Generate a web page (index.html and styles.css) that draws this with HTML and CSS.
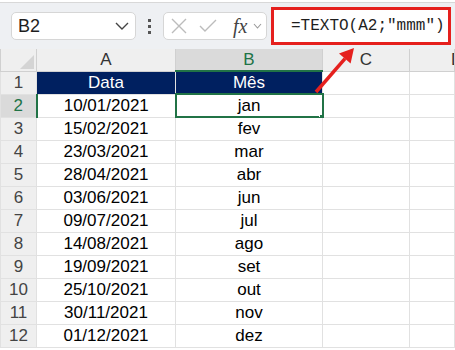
FILE: index.html
```html
<!DOCTYPE html>
<html lang="pt">
<head>
  <meta charset="UTF-8" />
  <title>TEXTO mmm</title>
  <link rel="stylesheet" href="styles.css">
</head>
<body>

  <div class="topbar"></div>

  <!-- formula bar -->
  <div class="toolbar">
    <div class="name-box">
      <span>B2</span>
      <svg width="14" height="8" viewBox="0 0 14 8"><path d="M1 1 L7 7 L13 1" fill="none" stroke="#444" stroke-width="1.4"/></svg>
    </div>
    <div class="dots"><i></i><i></i><i></i></div>
    <div class="fx-box">
      <svg width="16" height="16" viewBox="0 0 16 16"><path d="M1 1 L15 15 M15 1 L1 15" stroke="#bcbcbc" stroke-width="1.4"/></svg>
      <svg width="18" height="14" viewBox="0 0 18 14"><path d="M1 7 L6 12 L17 1" fill="none" stroke="#bcbcbc" stroke-width="1.4"/></svg>
      <span class="fx">fx</span>
      <svg width="9" height="6" viewBox="0 0 9 6"><path d="M1 1 L4.5 5 L8 1" fill="none" stroke="#9a9a9a" stroke-width="1.1"/></svg>
    </div>
    <div class="formula">=TEXTO(A2;"mmm")</div>
  </div>

  <table class="sheet">
    <colgroup>
      <col style="width:36px">
      <col style="width:139px">
      <col style="width:147px">
      <col style="width:87px">
      <col>
    </colgroup>
    <tr class="col-head">
      <th class="corner"><svg width="14" height="14" viewBox="0 0 14 14"><path d="M14 0 L14 14 L0 14 Z" fill="#d4d4d4"/></svg></th>
      <th>A</th>
      <th class="sel">B</th>
      <th>C</th>
      <th class="cut">D</th>
    </tr>
    <tr>
      <th class="row-num">1</th>
      <td class="title">Data</td>
      <td class="title">Mês</td>
      <td></td><td></td>
    </tr>
    <tr>
      <th class="row-num sel">2</th>
      <td>10/01/2021</td>
      <td class="active">jan<span class="handle"></span></td>
      <td></td><td></td>
    </tr>
    <tr><th class="row-num">3</th><td>15/02/2021</td><td>fev</td><td></td><td></td></tr>
    <tr><th class="row-num">4</th><td>23/03/2021</td><td>mar</td><td></td><td></td></tr>
    <tr><th class="row-num">5</th><td>28/04/2021</td><td>abr</td><td></td><td></td></tr>
    <tr><th class="row-num">6</th><td>03/06/2021</td><td>jun</td><td></td><td></td></tr>
    <tr><th class="row-num">7</th><td>09/07/2021</td><td>jul</td><td></td><td></td></tr>
    <tr><th class="row-num">8</th><td>14/08/2021</td><td>ago</td><td></td><td></td></tr>
    <tr><th class="row-num">9</th><td>19/09/2021</td><td>set</td><td></td><td></td></tr>
    <tr><th class="row-num">10</th><td>25/10/2021</td><td>out</td><td></td><td></td></tr>
    <tr><th class="row-num">11</th><td>30/11/2021</td><td>nov</td><td></td><td></td></tr>
    <tr><th class="row-num">12</th><td>01/12/2021</td><td>dez</td><td></td><td></td></tr>
  </table>

  <!-- annotation arrow -->
  <svg class="arrow" width="455" height="350" viewBox="0 0 455 350">
    <line x1="316" y1="92" x2="345" y2="58.6" stroke="#e5201e" stroke-width="3.5"/>
    <polygon points="354,48 350.6,63.6 339,53.6" fill="#e5201e"/>
  </svg>

</body>
</html>
```

FILE: styles.css
```css
* {
  box-sizing: border-box;
  margin: 0;
  padding: 0;
}

body {
  font-family: 'Liberation Sans', Arial, sans-serif;
  background: #fff;
  width: 455px;
  height: 350px;
  overflow: hidden;
  position: relative;
}

.topbar {
  height: 3px;
  background: #fff;
  border-bottom: 1px solid #d8d8d8;
}

.toolbar {
  height: 46px;
  background: #eef0f3;
  display: flex;
  align-items: center;
  padding-left: 11px;
}

.name-box {
  width: 125px;
  height: 28px;
  background: #fff;
  border: 1px solid #d6d6d6;
  border-radius: 5px;
  display: flex;
  align-items: center;
  justify-content: space-between;
  padding: 0 6px 0 6px;
  font-size: 18px;
  color: #1e1e1e;
}

.dots {
  width: 27px;
  display: flex;
  flex-direction: column;
  align-items: center;
  gap: 3px;
}

.dots i {
  width: 3px;
  height: 3px;
  background: #555;
}

.fx-box {
  width: 104px;
  height: 28px;
  background: #fff;
  border: 1px solid #d6d6d6;
  border-radius: 5px;
  display: flex;
  align-items: center;
  gap: 12px;
  padding-left: 7px;
}

.fx-box .fx {
  font-family: 'Liberation Serif', serif;
  font-style: italic;
  font-size: 20px;
  color: #444;
  margin-left: 4px;
  margin-right: -6px;
}

.formula {
  margin-left: 4px;
  width: 180px;
  height: 38px;
  background: #fff;
  border: 3px solid #e5201e;
  font-family: 'Liberation Mono', monospace;
  font-size: 16px;
  color: #1e1e1e;
  display: flex;
  align-items: center;
  padding-left: 17px;
  white-space: nowrap;
}

.sheet {
  border-collapse: collapse;
  table-layout: fixed;
  width: 455px;
}

.sheet th,
.sheet td {
  height: 23px;
  padding: 0;
  font-size: 17px;
  font-weight: normal;
  text-align: center;
  border: 1px solid #e1e1e1;
  white-space: nowrap;
  overflow: hidden;
}

.col-head th {
  height: 22px;
  background: #efefef;
  color: #333;
  border-color: #d0d0d0;
  border-top: none;
  font-size: 17px;
}

.col-head th.sel {
  background: #dadada;
  color: #217346;
  border-bottom: 2px solid #217346;
}

.col-head th.cut {
  text-align: left;
  padding-left: 41px;
}

.corner {
  position: relative;
  border-left: none;
}

.corner svg {
  position: absolute;
  right: 2px;
  bottom: 2px;
}

.row-num {
  background: #efefef;
  color: #444;
  border-color: #d0d0d0;
  border-left: none;
}

.row-num.sel {
  background: #dadada;
  color: #217346;
  border-right: 2px solid #217346;
}

.title {
  background: #002060;
  color: #fff;
}

.active {
  position: relative;
  outline: 2px solid #217346;
  outline-offset: -1px;
}

.handle {
  position: absolute;
  right: -4px;
  bottom: -4px;
  width: 7px;
  height: 7px;
  background: #217346;
  border: 1px solid #fff;
}

.arrow {
  position: absolute;
  left: 0;
  top: 0;
  pointer-events: none;
}
```
